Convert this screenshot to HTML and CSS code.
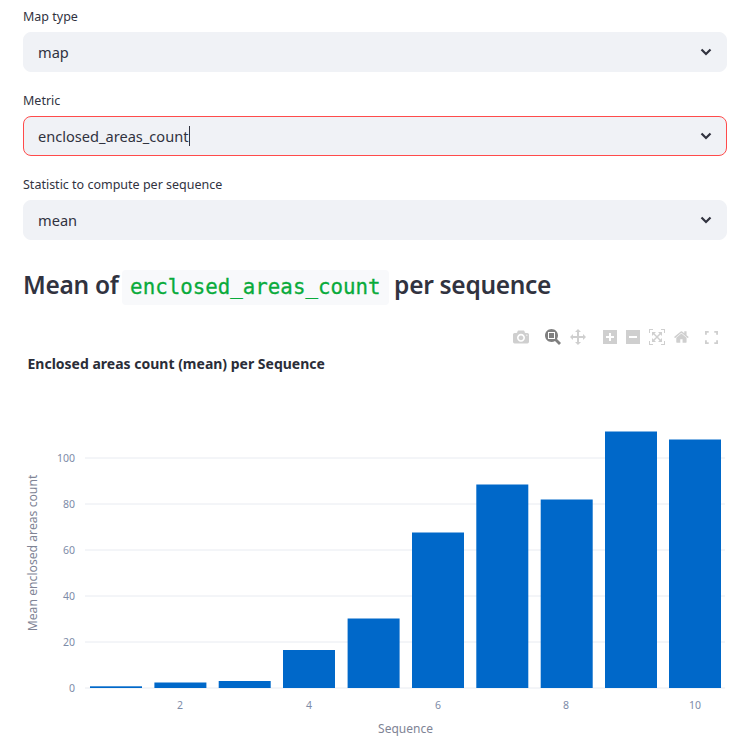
FILE: index.html
```html
<!DOCTYPE html>
<html lang="en">
<head>
  <meta charset="UTF-8">
  <title>Map metrics</title>
  <link rel="stylesheet" href="styles.css">
</head>
<body>
  <div class="field">
    <div class="field-label">Map type</div>
    <div class="select">
      <span>map</span>
      <svg class="chevron" viewBox="0 0 12 8"><path d="M1.500 1.500 6 6l4.500-4.500"/></svg>
    </div>
  </div>
  <div class="field">
    <div class="field-label">Metric</div>
    <div class="select select-focus">
      <span class="value-caret">enclosed_areas_count</span>
      <svg class="chevron" viewBox="0 0 12 8"><path d="M1.500 1.500 6 6l4.500-4.500"/></svg>
    </div>
  </div>
  <div class="field">
    <div class="field-label">Statistic to compute per sequence</div>
    <div class="select">
      <span>mean</span>
      <svg class="chevron" viewBox="0 0 12 8"><path d="M1.500 1.500 6 6l4.500-4.500"/></svg>
    </div>
  </div>

  <h2 class="heading">Mean of <code>enclosed_areas_count</code> per sequence</h2>

  <div class="modebar">
    <svg class="mb-icon" viewBox="0 -150 1000 1000"><g transform="matrix(1 0 0 -1 0 700)"><path d="m500 450c-83 0-150-67-150-150 0-83 67-150 150-150 83 0 150 67 150 150 0 83-67 150-150 150z m400 150h-120c-16 0-34 13-39 29l-31 93c-6 15-23 28-40 28h-340c-16 0-34-13-39-28l-31-94c-6-15-23-28-40-28h-120c-55 0-100-45-100-100v-450c0-55 45-100 100-100h800c55 0 100 45 100 100v450c0 55-45 100-100 100z m-400-550c-138 0-250 112-250 250 0 138 112 250 250 250 138 0 250-112 250-250 0-138-112-250-250-250z m365 380c-19 0-35 16-35 35 0 19 16 35 35 35 19 0 35-16 35-35 0-19-16-35-35-35z"/></g></svg>
    <svg class="mb-icon mb-active mb-group" viewBox="0 -150 1000 1000"><g transform="matrix(1 0 0 -1 0 700)"><path d="m1000-25l-250 251c40 63 63 138 63 218 0 224-182 406-407 406-224 0-406-182-406-406s183-406 407-406c80 0 155 22 218 62l250-250 125 125z m-812 250l0 438 437 0 0-438-437 0z m62 375l313 0 0-312-313 0 0 312z"/></g></svg>
    <svg class="mb-icon" viewBox="0 -150 1000 1000"><g transform="matrix(1 0 0 -1 0 700)"><path d="m1000 350l-187 188 0-125-250 0 0 250 125 0-188 187-187-187 125 0 0-250-250 0 0 125-188-188 186-187 0 125 252 0 0-250-125 0 187-188 188 188-125 0 0 250 250 0 0-125 187 188z"/></g></svg>
    <svg class="mb-icon mb-group" viewBox="0 -150 875 1000"><g transform="matrix(1 0 0 -1 0 700)"><path d="m1 787l0-875 875 0 0 875-875 0z m687-500l-187 0 0-187-125 0 0 187-188 0 0 125 188 0 0 187 125 0 0-187 187 0 0-125z"/></g></svg>
    <svg class="mb-icon" viewBox="0 -150 875 1000"><g transform="matrix(1 0 0 -1 0 700)"><path d="m0 788l0-876 875 0 0 876-875 0z m688-500l-500 0 0 125 500 0 0-125z"/></g></svg>
    <svg class="mb-icon" viewBox="0 -150 1000 1000"><g transform="matrix(1 0 0 -1 0 700)"><path d="m250 850l-187 0-63 0 0-62 0-188 63 0 0 188 187 0 0 62z m688 0l-188 0 0-62 188 0 0-188 62 0 0 188 0 62-62 0z m-875-938l0 188-63 0 0-188 0-62 63 0 187 0 0 62-187 0z m875 188l0-188-188 0 0-62 188 0 62 0 0 62 0 188-62 0z m-125 188l-1 0-93-94-156 156 156 156 92-93 2 0 0 250-250 0 0-2 93-92-156-156-156 156 94 92 0 2-250 0 0-250 0 0 93 93 157-156-157-156-93 94 0 0 0-250 250 0 0 0-94 93 156 157 156-157-93-93 0 0 250 0 0 250z"/></g></svg>
    <svg class="mb-icon" viewBox="0 -150 928.600 1000"><g transform="matrix(1 0 0 -1 0 700)"><path d="m786 296v-267q0-15-11-26t-25-10h-214v214h-143v-214h-214q-15 0-25 10t-11 26v267q0 1 0 2t0 2l321 264 321-264q1-1 1-4z m124 39l-34-41q-5-5-12-6h-2q-7 0-12 3l-386 322-386-322q-7-4-13-4-7 2-12 7l-35 41q-4 5-3 13t6 12l401 334q18 15 42 15t43-15l136-114v109q0 8 5 13t13 5h107q8 0 13-5t5-13v-227l122-102q5-5 6-12t-4-13z"/></g></svg>
    <svg class="mb-icon mb-full mb-group" viewBox="0 0 14 14"><path d="M0 0h4v2H2v2H0zM10 0h4v4h-2V2h-2zM0 10h2v2h2v2H0zM12 10h2v4h-4v-2h2z"/></svg>
  </div>

  <svg class="chart" viewBox="0 0 704 404">
    <text class="chart-title" x="4.500" y="21">Enclosed areas count (mean) per Sequence</text>

    <g class="grid">
      <line x1="62" x2="702" y1="294" y2="294"/>
      <line x1="62" x2="702" y1="248" y2="248"/>
      <line x1="62" x2="702" y1="202" y2="202"/>
      <line x1="62" x2="702" y1="156" y2="156"/>
      <line x1="62" x2="702" y1="110" y2="110"/>
      <line x1="62" x2="702" y1="340" y2="340"/>
    </g>

    <g class="bars">
      <rect x="67" y="338.300" width="52" height="1.700"/>
      <rect x="131.400" y="334.500" width="52" height="5.500"/>
      <rect x="195.700" y="333" width="52" height="7"/>
      <rect x="260" y="302" width="52" height="38"/>
      <rect x="324.600" y="270.500" width="52" height="69.500"/>
      <rect x="389" y="184.500" width="52" height="155.500"/>
      <rect x="453.300" y="136.500" width="52" height="203.500"/>
      <rect x="517.700" y="151.500" width="52" height="188.500"/>
      <rect x="582" y="83.500" width="52" height="256.500"/>
      <rect x="646" y="91.500" width="52" height="248.500"/>
    </g>

    <g class="tick tick-y">
      <text x="52" y="344">0</text>
      <text x="52" y="298">20</text>
      <text x="52" y="252">40</text>
      <text x="52" y="206">60</text>
      <text x="52" y="160">80</text>
      <text x="52" y="114">100</text>
    </g>
    <g class="tick tick-x">
      <text x="157" y="361">2</text>
      <text x="286" y="361">4</text>
      <text x="415" y="361">6</text>
      <text x="543" y="361">8</text>
      <text x="672" y="361">10</text>
    </g>

    <text class="axis-title" x="382.500" y="385">Sequence</text>
    <text class="axis-title axis-title-y" transform="translate(14 205) rotate(-90)">Mean enclosed areas count</text>
  </svg>
</body>
</html>
```

FILE: styles.css
```css
body {
  margin: 0;
  padding: 8px 21px 0 23px;
  background: #fff;
  color: #31333f;
  font-family: "Noto Sans", Arial, sans-serif;
}
.field {
  margin-bottom: 20px;
}
.field-label {
  height: 24px;
  font-size: 12.500px;
  line-height: 17px;
}
.select {
  display: flex;
  align-items: center;
  justify-content: space-between;
  box-sizing: border-box;
  height: 40px;
  padding: 0 14px 0 14px;
  background: #f0f2f6;
  border: 1px solid #f0f2f6;
  border-radius: 8px;
  font-size: 14.600px;
}
.select-focus {
  border-color: #ff4b4b;
}
.value-caret {
  padding-right: 1px;
  border-right: 1px solid #31333f;
  line-height: 20px;
}
.chevron {
  width: 12px;
  height: 8px;
  fill: none;
  stroke: #31333f;
  stroke-width: 2.200;
}
.heading {
  margin: 27px 0 0;
  font-size: 24.500px;
  font-weight: 600;
  line-height: 36px;
  letter-spacing: -0.3px;
}
.heading code {
  display: inline-block;
  margin: 0 -1px 0 -3px;
  padding: 0 8.500px;
  background: #f8f9fb;
  border-radius: 4px;
  color: #09ab3b;
  font-family: "DejaVu Sans Mono", monospace;
  font-size: 20.800px;
  font-weight: 400;
  line-height: 35px;
  letter-spacing: 0;
  -webkit-text-stroke: 0.3px #09ab3b;
}
.modebar {
  display: flex;
  justify-content: flex-end;
  align-items: center;
  gap: 9px;
  height: 16px;
  margin-top: 24px;
  padding-right: 9px;
}
.mb-icon {
  width: auto;
  height: 16px;
  fill: #cfcfcf;
}
.mb-active {
  fill: #7f7f7f;
}
.mb-group {
  margin-left: 7.500px;
}
.mb-full {
  height: 13px;
}
.chart {
  display: block;
  width: 704px;
  height: 404px;
  margin-top: 3px;
}
.chart-title {
  fill: #2a2d38;
  font-size: 14px;
  font-weight: 700;
}
.grid line {
  stroke: #e8ebf1;
  stroke-width: 1;
}
.bars rect {
  fill: #0068c9;
}
.tick text {
  fill: #7d8ba8;
  font-size: 10.500px;
}
.tick-y text {
  text-anchor: end;
}
.tick-x text {
  text-anchor: middle;
}
.axis-title {
  fill: #808495;
  font-size: 12px;
  text-anchor: middle;
}
.axis-title-y {
  font-size: 12.200px;
}
```
